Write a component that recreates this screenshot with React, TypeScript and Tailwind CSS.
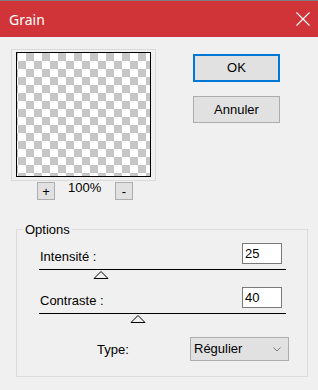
import { FC } from 'react';

const sans = { fontFamily: '"Liberation Sans", Arial, sans-serif' };

const Thumb: FC<{ value: number }> = ({ value }) => (
  <div className="relative h-[9px] w-[247px] border-t border-black">
    <svg
      className="absolute top-[1px]"
      style={{ left: `${(value / 100) * 246 - 7.5}px` }}
      width="16"
      height="8"
      viewBox="0 0 16 8"
    >
      <path d="M8 0.5 L15 7.5 L1 7.5 Z" fill="#f0f0f0" stroke="#000" strokeWidth="1" />
    </svg>
  </div>
);

const SliderRow: FC<{ label: string; value: number }> = ({ label, value }) => (
  <div className="flex flex-col">
    <div className="flex items-end">
      <span className="ml-[23px] w-[202px] text-[13px] leading-[15px] text-black">{label}</span>
      <div className="flex h-[21px] w-[40px] items-center border border-[#7a7a7a] bg-white pl-[2px] text-[13px] leading-[15px] text-black">
        {value}
      </div>
    </div>
    <div className="ml-[22px] mt-[5px]">
      <Thumb value={value} />
    </div>
  </div>
);

const App: FC = () => {
  return (
    <div className="h-[390px] w-[318px] overflow-hidden bg-[#f0f0f0]" style={sans}>
      <div className="flex h-[37px] items-center justify-between border-t border-[#7d7d7d] bg-[#d13438] pl-[9px] pr-[8px]">
        <span className="text-[14px] text-white" style={{ fontFamily: '"Noto Sans", sans-serif' }}>
          Grain
        </span>
        <svg width="14" height="14" viewBox="0 0 14 14" className="mb-[1px]">
          <path d="M0.5 0.5 L13.5 13.5 M13.5 0.5 L0.5 13.5" stroke="#fff" strokeWidth="1.1" />
        </svg>
      </div>

      <div className="flex items-start">
        <div className="flex flex-col pl-[11px] pt-[12px]">
          <div className="border border-[#dadada] pb-[3px] pl-[4px] pr-[4px] pt-[2px]">
            <div className="h-[125px] w-[135px] border border-black bg-[conic-gradient(#c6c6c6_25%,#fff_0_50%,#c6c6c6_0_75%,#fff_0)] bg-[length:16px_16px] bg-[position:1px_0px]" />
          </div>
          <div className="ml-[26px] mt-[1px] flex items-start">
            <div className="flex h-[18px] w-[18px] items-center justify-center border border-[#adadad] bg-[#e1e1e1] text-[13px] leading-none text-black">
              +
            </div>
            <span className="-mt-[2px] ml-[13px] w-[34px] text-[13px] leading-[15px] text-black">100%</span>
            <div className="ml-[13px] flex h-[18px] w-[18px] items-center justify-center border border-[#adadad] bg-[#e1e1e1] text-[13px] leading-none text-black">
              -
            </div>
          </div>
        </div>

        <div className="ml-[37px] flex flex-col pt-[17px]">
          <div className="flex h-[28px] w-[87px] items-center justify-center border-2 border-[#0078d7] bg-[#e1e1e1] text-[13px] text-black">
            OK
          </div>
          <div className="mt-[14px] flex h-[27px] w-[87px] items-center justify-center border border-[#adadad] bg-[#e1e1e1] text-[13px] text-black">
            Annuler
          </div>
        </div>
      </div>

      <fieldset className="ml-[16px] mt-[22px] w-[292px] border border-[#dcdcdc] pb-[15px]">
        <legend className="ml-[6px] px-[2px] text-[13px] leading-[15px] text-black">Options</legend>
        <div className="mt-[6px] flex flex-col gap-[9px]">
          <SliderRow label="Intensité :" value={25} />
          <SliderRow label="Contraste :" value={40} />
        </div>
        <div className="mt-[15px] flex items-center">
          <span className="ml-[80px] w-[93px] text-[13px] leading-[15px] text-black">Type:</span>
          <div className="flex h-[24px] w-[99px] items-center justify-between border border-[#adadad] bg-[#e1e1e1] pl-[3px] pr-[7px] text-[13px] text-black">
            <span>Régulier</span>
            <svg width="8" height="5" viewBox="0 0 8 5">
              <path d="M0.5 0.5 L4 4 L7.5 0.5" fill="none" stroke="#7a7a7a" strokeWidth="1" />
            </svg>
          </div>
        </div>
      </fieldset>
    </div>
  );
};

export default App;
